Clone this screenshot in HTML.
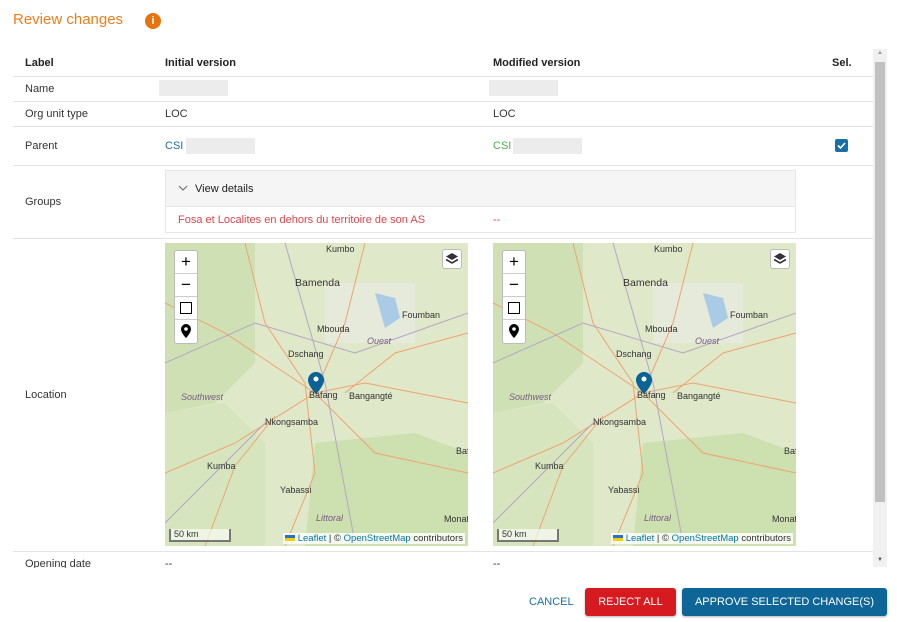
<!DOCTYPE html>
<html><head><meta charset="utf-8"><style>
*{box-sizing:border-box;margin:0;padding:0}
body{width:897px;height:622px;background:#fff;font-family:"Liberation Sans",Arial,sans-serif;font-size:11px;color:#333;position:relative;overflow:hidden}
.a{position:absolute}
.t{position:absolute;white-space:nowrap}
.line{position:absolute;left:13px;width:860px;height:1px;background:#e3e3e3}
.blank{position:absolute;background:#ececec;height:16px}
.map{position:absolute;width:303px;height:303px;overflow:hidden;background:#dfe9c9}
.zc{position:absolute;left:9px;top:7px;width:24px;background:#fff;border:1px solid #bbb;border-radius:3px}
.zc div{height:23px;border-bottom:1px solid #ccc;text-align:center;font-size:17px;line-height:22px;color:#000}
.zc div:last-child{border-bottom:none}
.lay{position:absolute;right:6px;top:6px;width:20px;height:20px;background:#fff;border:1px solid #bbb;border-radius:3px}
.attr{position:absolute;right:3px;bottom:2px;background:rgba(255,255,255,.8);font-size:9.5px;padding:0 2px;color:#333}
.attr span{color:#0078a8}
.scale{position:absolute;left:4px;bottom:4px;width:62px;height:13px;border:2px solid #777;border-top:none;background:rgba(255,255,255,.6);font-size:9px;line-height:11px;padding-left:3px;color:#333}
.ml{position:absolute;font-size:9px;color:#333;white-space:nowrap}
.mi{position:absolute;font-size:9px;color:#7a5d82;font-style:italic}
</style></head><body>
<div class="t" style="left:13px;top:11px;font-size:15px;color:#f07d1a">Review changes</div>
<div class="a" style="left:145px;top:13px;width:16px;height:16px;border-radius:50%;background:#e8720c;color:#fff;font-weight:bold;font-size:11px;text-align:center;line-height:16px">i</div>

<div class="a" style="left:0;top:49px;width:897px;height:519px;overflow:hidden">
<div class="a" style="left:0;top:-49px;width:897px;height:568px">
<div class="t" style="left:25px;top:57px;font-weight:bold;color:#222">Label</div>
<div class="t" style="left:165px;top:57px;font-weight:bold;color:#222">Initial version</div>
<div class="t" style="left:493px;top:57px;font-weight:bold;color:#222">Modified version</div>
<div class="t" style="left:832px;top:57px;font-weight:bold;color:#222">Sel.</div>
<div class="line" style="top:76px"></div>
<div class="t" style="left:25px;top:83px">Name</div>
<div class="blank" style="left:159px;top:80px;width:69px"></div>
<div class="blank" style="left:489px;top:80px;width:69px"></div>
<div class="line" style="top:101px"></div>
<div class="t" style="left:25px;top:108px">Org unit type</div>
<div class="t" style="left:165px;top:108px">LOC</div>
<div class="t" style="left:493px;top:108px">LOC</div>
<div class="line" style="top:126px"></div>
<div class="t" style="left:25px;top:140px">Parent</div>
<div class="t" style="left:165px;top:140px;color:#1a6fa8">CSI</div>
<div class="blank" style="left:186px;top:138px;width:69px"></div>
<div class="t" style="left:493px;top:140px;color:#4caf50">CSI</div>
<div class="blank" style="left:513px;top:138px;width:69px"></div>
<div class="a" style="left:835px;top:139px;width:13px;height:13px;background:#1a6fa8;border-radius:2px"><svg width="13" height="13"><path d="M3 6.5l2.5 2.5 4.5-5" stroke="#fff" stroke-width="1.6" fill="none"/></svg></div>
<div class="line" style="top:165px"></div>
<div class="t" style="left:25px;top:196px">Groups</div>
<div class="a" style="left:165px;top:170px;width:631px;height:63px;border:1px solid #e6e6e6"></div>
<div class="a" style="left:166px;top:171px;width:629px;height:36px;background:#f5f5f5;border-bottom:1px solid #e6e6e6"></div>
<svg class="a" style="left:178px;top:185px" width="10" height="7"><path d="M1 1l4 4 4-4" stroke="#666" fill="none"/></svg>
<div class="t" style="left:195px;top:183px;color:#222">View details</div>
<div class="t" style="left:178px;top:214px;color:#e0434b">Fosa et Localites en dehors du territoire de son AS</div>
<div class="t" style="left:493px;top:214px;color:#e0434b">--</div>
<div class="line" style="top:238px"></div>
<div class="t" style="left:25px;top:389px">Location</div>

<div class="map" style="left:165px;top:243px">
<svg class="a" width="303" height="303" style="left:0;top:0">
<rect width="303" height="303" fill="#dfe8c8"/>
<path d="M0 0h90v120l-40 40-50 10z" fill="#cfe0b4"/>
<path d="M0 170l60-10 40 40 0 103H0z" fill="#d6e5be"/>
<path d="M150 200l100-10 53 20v93H140z" fill="#cde0b0"/>
<path d="M160 40h90v60h-90z" fill="#e6eada"/>
<path d="M210 50l20 5 5 20-15 10z" fill="#a9cbe6"/>
<path d="M0 60L60 90 120 130 150 150 200 140 303 160M80 0L100 80 140 140 150 230 120 303M200 0l-20 80 -30 70M303 90L230 110 180 150M0 230l70-30 80-50 60 60 93 20M40 303l30-80 40-50" stroke="#f0a36f" stroke-width="1" fill="none"/>
<path d="M0 120l90-40 100 30 113-40M120 0l40 140 30 160M0 280l60-60 40-40" stroke="#b6a6c4" stroke-width="1" fill="none"/>
</svg>
<div class="zc"><div>+</div><div>−</div><div><span style="display:inline-block;width:12px;height:12px;border:1.5px solid #000;vertical-align:-1px"></span></div><div><svg width="10" height="14" style="vertical-align:-2px"><path d="M5 0a5 5 0 0 0-5 5c0 4 5 9 5 9s5-5 5-9a5 5 0 0 0-5-5z" fill="#000"/><circle cx="5" cy="5" r="1.8" fill="#fff"/></svg></div></div>
<div class="lay"><svg width="18" height="18"><path d="M9 3l6 3.5-6 3.5-6-3.5z" fill="#333"/><path d="M3 9.5l6 3.5 6-3.5" stroke="#333" stroke-width="1.6" fill="none"/></svg></div>
<div class="ml" style="left:161px;top:1px">Kumbo</div>
<div class="ml" style="left:130px;top:34px;font-size:10.5px">Bamenda</div>
<div class="ml" style="left:237px;top:67px">Foumban</div>
<div class="ml" style="left:152px;top:81px">Mbouda</div>
<div class="mi" style="left:202px;top:93px">Ouest</div>
<div class="ml" style="left:123px;top:106px">Dschang</div>
<div class="mi" style="left:16px;top:149px">Southwest</div>
<div class="ml" style="left:144px;top:147px">Bafang</div>
<div class="ml" style="left:184px;top:148px">Bangangté</div>
<div class="ml" style="left:100px;top:174px">Nkongsamba</div>
<div class="ml" style="left:42px;top:218px">Kumba</div>
<div class="ml" style="left:115px;top:242px">Yabassi</div>
<div class="mi" style="left:151px;top:270px">Littoral</div>
<div class="ml" style="left:279px;top:271px">Monat</div>
<div class="ml" style="left:291px;top:203px">Baf</div>
<svg class="a" style="left:143px;top:129px" width="16" height="22"><path d="M8 0a8 8 0 0 0-8 8c0 6 8 14 8 14s8-8 8-14a8 8 0 0 0-8-8z" fill="#0a6296"/><circle cx="8" cy="7" r="2.5" fill="#fff"/></svg>
<div class="scale">50 km</div>
<div class="attr"><b style="display:inline-block;width:10px;height:6px;background:linear-gradient(#2a6fc9 50%,#f5d000 50%);vertical-align:0"></b> <span>Leaflet</span> | © <span>OpenStreetMap</span> contributors</div>
</div>

<div class="map" style="left:493px;top:243px">
<svg class="a" width="303" height="303" style="left:0;top:0">
<rect width="303" height="303" fill="#dfe8c8"/>
<path d="M0 0h90v120l-40 40-50 10z" fill="#cfe0b4"/>
<path d="M0 170l60-10 40 40 0 103H0z" fill="#d6e5be"/>
<path d="M150 200l100-10 53 20v93H140z" fill="#cde0b0"/>
<path d="M160 40h90v60h-90z" fill="#e6eada"/>
<path d="M210 50l20 5 5 20-15 10z" fill="#a9cbe6"/>
<path d="M0 60L60 90 120 130 150 150 200 140 303 160M80 0L100 80 140 140 150 230 120 303M200 0l-20 80 -30 70M303 90L230 110 180 150M0 230l70-30 80-50 60 60 93 20M40 303l30-80 40-50" stroke="#f0a36f" stroke-width="1" fill="none"/>
<path d="M0 120l90-40 100 30 113-40M120 0l40 140 30 160M0 280l60-60 40-40" stroke="#b6a6c4" stroke-width="1" fill="none"/>
</svg>
<div class="zc"><div>+</div><div>−</div><div><span style="display:inline-block;width:12px;height:12px;border:1.5px solid #000;vertical-align:-1px"></span></div><div><svg width="10" height="14" style="vertical-align:-2px"><path d="M5 0a5 5 0 0 0-5 5c0 4 5 9 5 9s5-5 5-9a5 5 0 0 0-5-5z" fill="#000"/><circle cx="5" cy="5" r="1.8" fill="#fff"/></svg></div></div>
<div class="lay"><svg width="18" height="18"><path d="M9 3l6 3.5-6 3.5-6-3.5z" fill="#333"/><path d="M3 9.5l6 3.5 6-3.5" stroke="#333" stroke-width="1.6" fill="none"/></svg></div>
<div class="ml" style="left:161px;top:1px">Kumbo</div>
<div class="ml" style="left:130px;top:34px;font-size:10.5px">Bamenda</div>
<div class="ml" style="left:237px;top:67px">Foumban</div>
<div class="ml" style="left:152px;top:81px">Mbouda</div>
<div class="mi" style="left:202px;top:93px">Ouest</div>
<div class="ml" style="left:123px;top:106px">Dschang</div>
<div class="mi" style="left:16px;top:149px">Southwest</div>
<div class="ml" style="left:144px;top:147px">Bafang</div>
<div class="ml" style="left:184px;top:148px">Bangangté</div>
<div class="ml" style="left:100px;top:174px">Nkongsamba</div>
<div class="ml" style="left:42px;top:218px">Kumba</div>
<div class="ml" style="left:115px;top:242px">Yabassi</div>
<div class="mi" style="left:151px;top:270px">Littoral</div>
<div class="ml" style="left:279px;top:271px">Monat</div>
<div class="ml" style="left:291px;top:203px">Baf</div>
<svg class="a" style="left:143px;top:129px" width="16" height="22"><path d="M8 0a8 8 0 0 0-8 8c0 6 8 14 8 14s8-8 8-14a8 8 0 0 0-8-8z" fill="#0a6296"/><circle cx="8" cy="7" r="2.5" fill="#fff"/></svg>
<div class="scale">50 km</div>
<div class="attr"><b style="display:inline-block;width:10px;height:6px;background:linear-gradient(#2a6fc9 50%,#f5d000 50%);vertical-align:0"></b> <span>Leaflet</span> | © <span>OpenStreetMap</span> contributors</div>
</div>

<div class="line" style="top:551px"></div>
<div class="t" style="left:25px;top:558px">Opening date</div>
<div class="t" style="left:165px;top:558px">--</div>
<div class="t" style="left:493px;top:558px">--</div>
</div>
</div>

<div class="a" style="left:873px;top:49px;width:14px;height:518px;background:#f1f1f1"></div>
<div class="a" style="left:875px;top:62px;width:10px;height:440px;background:#c1c1c1"></div>
<div class="t" style="left:877px;top:50px;font-size:6px;color:#999">▲</div>
<div class="t" style="left:877px;top:557px;font-size:6px;color:#555">▼</div>

<div class="t" style="left:529px;top:596px;color:#1a6fa8;font-size:11px">CANCEL</div>
<div class="a" style="left:585px;top:588px;width:91px;height:28px;background:#d71920;border-radius:3px;color:#fff;font-size:11px;text-align:center;line-height:28px;box-shadow:0 1px 2px rgba(0,0,0,.3)">REJECT ALL</div>
<div class="a" style="left:682px;top:588px;width:205px;height:28px;background:#0d6598;border-radius:3px;color:#fff;font-size:11px;text-align:center;line-height:28px;box-shadow:0 1px 2px rgba(0,0,0,.3)">APPROVE SELECTED CHANGE(S)</div>
</body></html>
